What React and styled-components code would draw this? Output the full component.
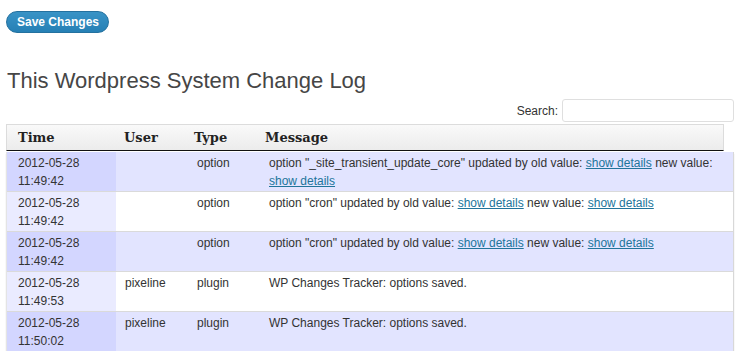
import React from 'react'
import styled, { createGlobalStyle } from 'styled-components'

const Global = createGlobalStyle`
  body {
    margin: 0;
    background: #fff;
    font-family: "Liberation Sans", Arial, sans-serif;
    color: #333;
  }
`

const Page = styled.div`
  padding: 11px 10px 0 6px;
`

const SaveButton = styled.button`
  display: block;
  height: 22px;
  padding: 0 9px 0 10px;
  border: 1px solid #24719f;
  border-radius: 11px;
  background: linear-gradient(#3993c6, #2680b5);
  color: #fff;
  font-family: "Liberation Sans", Arial, sans-serif;
  font-weight: bold;
  font-size: 12px;
  line-height: 20px;
`

const Title = styled.h2`
  margin: 34px 0 0 1px;
  font-size: 22px;
  line-height: 28px;
  font-weight: normal;
  color: #464646;
`

const SearchRow = styled.div`
  display: flex;
  justify-content: flex-end;
  align-items: center;
  gap: 4px;
  margin-top: 4px;
  font-size: 12px;
  color: #333;
`

const SearchInput = styled.input`
  width: 172px;
  height: 23px;
  box-sizing: border-box;
  border: 1px solid #dfdfdf;
  border-radius: 3px;
  background: #fff;
`

const Grid = styled.div`
  display: grid;
  grid-template-columns: 109px 71px 71px 1fr;
`

const Head = styled(Grid)`
  margin-top: 2px;
  margin-right: 10px;
  height: 25px;
  background: linear-gradient(#f9f9f9, #ececec);
  border: 1px solid #dcdcdc;
  border-bottom: 1px solid #111;
`

const HeadCell = styled.div`
  padding-left: ${p => p.pad}px;
  font-family: "DejaVu Serif", Georgia, serif;
  font-weight: bold;
  font-size: 13px;
  line-height: 25px;
  color: #222;
`

const Body = styled.div`
  margin-top: 1px;
  border-left: 1px solid #e4e4e4;
  border-right: 1px solid #d8d8d8;
  box-shadow: 0 2px 1px #d6d6d6;
`

const Row = styled(Grid)`
  background: ${p => (p.odd ? '#e2e4ff' : '#fff')};
  border-bottom: 1px solid #dadada;
  &:last-child {
    border-bottom: none;
  }
`

const Cell = styled.div`
  padding: 2px 10px 1px ${p => p.pad}px;
  min-height: 36px;
  font-size: 12px;
  line-height: 18px;
  color: #333;
  background: ${p => (p.sorted ? (p.odd ? '#d3d6ff' : '#eaebff') : 'transparent')};
`

const Link = styled.a`
  color: #21759b;
  text-decoration: underline;
`

const Details = () => <Link href="#">show details</Link>

const rows = [
  {
    date: '2012-05-28', time: '11:49:42', user: '', type: 'option',
    msg: <>option "_site_transient_update_core" updated by old value: <Details /> new value: <Details /></>
  },
  {
    date: '2012-05-28', time: '11:49:42', user: '', type: 'option',
    msg: <>option "cron" updated by old value: <Details /> new value: <Details /></>
  },
  {
    date: '2012-05-28', time: '11:49:42', user: '', type: 'option',
    msg: <>option "cron" updated by old value: <Details /> new value: <Details /></>
  },
  { date: '2012-05-28', time: '11:49:53', user: 'pixeline', type: 'plugin', msg: 'WP Changes Tracker: options saved.' },
  { date: '2012-05-28', time: '11:50:02', user: 'pixeline', type: 'plugin', msg: 'WP Changes Tracker: options saved.' },
]

export default function App() {
  return (
    <Page>
      <Global />
      <SaveButton>Save Changes</SaveButton>
      <Title>This Wordpress System Change Log</Title>
      <SearchRow>
        <label>Search:</label>
        <SearchInput type="text" />
      </SearchRow>
      <Head>
        <HeadCell pad={11}>Time</HeadCell>
        <HeadCell pad={8}>User</HeadCell>
        <HeadCell pad={7}>Type</HeadCell>
        <HeadCell pad={7}>Message</HeadCell>
      </Head>
      <Body>
        {rows.map((r, i) => {
          const odd = i % 2 === 0
          return (
            <Row key={i} odd={odd}>
              <Cell sorted odd={odd} pad={11}>{r.date}<br />{r.time}</Cell>
              <Cell pad={9}>{r.user}</Cell>
              <Cell pad={10}>{r.type}</Cell>
              <Cell pad={11}>{r.msg}</Cell>
            </Row>
          )
        })}
      </Body>
    </Page>
  )
}
